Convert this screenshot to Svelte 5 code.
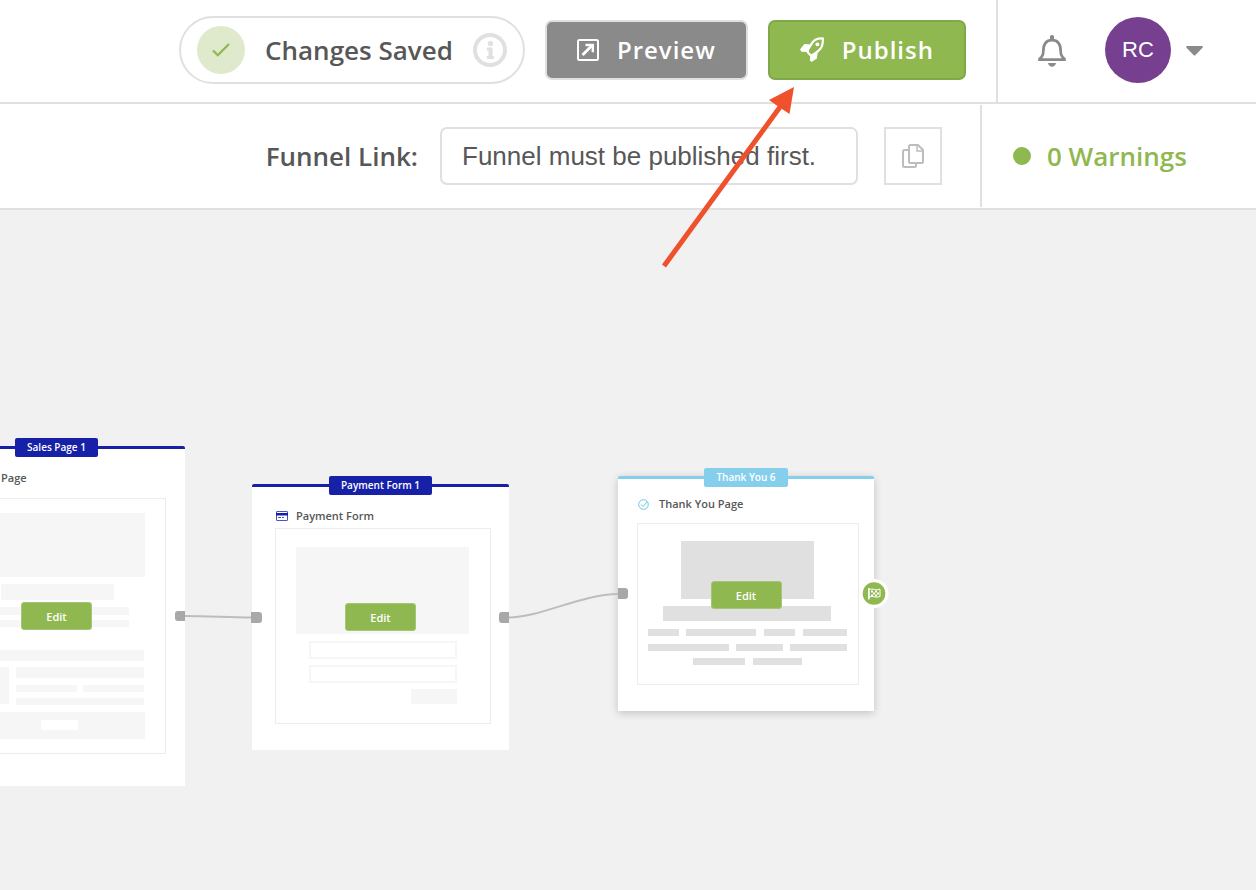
<script lang="ts">
  type Block = { x: number; y: number; w: number; h: number; kind?: string };

  type FunnelNode = {
    id: string;
    badge: string;
    title: string;
    x: number;
    y: number;
    width: number;
    thumb: { w: number; h: number; blocks: Block[] };
  };

  const nodes: FunnelNode[] = [
    {
      id: "sales",
      badge: "Sales Page 1",
      title: "Sales Page",
      x: -72,
      y: 236,
      width: 257,
      thumb: {
        w: 219,
        h: 256,
        blocks: [
          { x: 21, y: 15, w: 177, h: 64 },
          { x: 54, y: 86, w: 113, h: 16 },
          { x: 37, y: 109, w: 145, h: 8 },
          { x: 37, y: 122, w: 145, h: 7 },
          { x: 21, y: 152, w: 176, h: 11 },
          { x: 21, y: 169, w: 41, h: 37 },
          { x: 69, y: 169, w: 128, h: 11 },
          { x: 69, y: 187, w: 61, h: 7 },
          { x: 136, y: 187, w: 61, h: 7 },
          { x: 69, y: 200, w: 128, h: 7 },
          { x: 21, y: 214, w: 177, h: 27 },
          { x: 94, y: 222, w: 37, h: 10, kind: "hole" },
        ],
      },
    },
    {
      id: "payment",
      badge: "Payment Form 1",
      title: "Payment Form",
      x: 252,
      y: 274,
      width: 257,
      thumb: {
        w: 216,
        h: 196,
        blocks: [
          { x: 21, y: 19, w: 173, h: 87 },
          { x: 35, y: 114, w: 146, h: 16, kind: "field" },
          { x: 35, y: 138, w: 146, h: 16, kind: "field" },
          { x: 136, y: 161, w: 46, h: 15 },
        ],
      },
    },
    {
      id: "thanks",
      badge: "Thank You 6",
      title: "Thank You Page",
      x: 618,
      y: 266,
      width: 256,
      thumb: {
        w: 222,
        h: 162,
        blocks: [
          { x: 44, y: 18, w: 133, h: 58 },
          { x: 26, y: 83, w: 168, h: 15 },
          { x: 11, y: 106, w: 31, h: 7 },
          { x: 49, y: 106, w: 70, h: 7 },
          { x: 127, y: 106, w: 31, h: 7 },
          { x: 166, y: 106, w: 44, h: 7 },
          { x: 11, y: 121, w: 81, h: 7 },
          { x: 99, y: 121, w: 47, h: 7 },
          { x: 153, y: 121, w: 57, h: 7 },
          { x: 56, y: 135, w: 52, h: 7 },
          { x: 116, y: 135, w: 49, h: 7 },
        ],
      },
    },
  ];

  let link = $state("Funnel must be published first.");
</script>

<div class="page">
  <header>
    <div class="bar">
      <div class="actions">
        <div class="status">
          <span class="check">
            <svg width="20" height="16" viewBox="0 0 20 16" aria-hidden="true">
              <path d="M2 8.5 6.8 13.2 18 2" fill="none" stroke="#8fb850" stroke-width="2.3" />
            </svg>
          </span>
          <span>Changes Saved</span>
          <svg width="34" height="34" viewBox="0 0 34 34" aria-hidden="true">
            <circle cx="17" cy="17" r="15" fill="none" stroke="#e0e0e0" stroke-width="4" />
            <circle cx="17.5" cy="10.5" r="2.6" fill="#e0e0e0" />
            <path d="M14 14.5h5.500v8.500h1.500v3h-7v-3h1.500v-5.500H14z" fill="#e0e0e0" />
          </svg>
        </div>
        <button class="btn preview">
          <svg width="22" height="22" viewBox="0 0 22 22" fill="none" stroke="#fff" aria-hidden="true">
            <rect x="1" y="1" width="20" height="20" rx="1.5" stroke-width="2" />
            <path d="M5.5 16 15 6.5" stroke-width="2.8" />
            <path d="M8.5 6h7.3v7.3" stroke-width="2.4" />
          </svg>
          Preview
        </button>
        <button class="btn publish">
          <svg width="24" height="26" viewBox="0 0 24 26" aria-hidden="true">
            <path
              d="M22.800 1.500c-5.300-.300-8.600 1.200-11 4.800L7.800 12.800v2.600l2.600 2.700 2.800-.200 5.400-4.300c3.300-2.700 4.600-6.600 4.200-12.100z"
              fill="none"
              stroke="#fff"
              stroke-width="2.200"
            />
            <circle cx="17.400" cy="7.300" r="1.900" fill="#fff" />
            <path d="M10.600 7.500 4.300 6.900 0 12.400l1.500 2.400 6 .2z" fill="#fff" />
            <path d="M17.800 14.600 16.900 21.500 11.500 25l-1.700-1.500.700-6z" fill="#fff" />
          </svg>
          Publish
        </button>
      </div>
      <div class="account">
        <button class="bare" aria-label="Notifications">
          <svg width="28" height="32" viewBox="0 0 28 32" aria-hidden="true">
            <path
              d="M5.300 16.500c0-8 2.900-11.300 8.700-11.300s8.700 3.300 8.700 11.300c0 3.500 1 5.500 3.700 7.300v.800H1.600v-.800c2.700-1.800 3.700-3.800 3.700-7.300z"
              fill="none"
              stroke="#8a8a8a"
              stroke-width="2.700"
            />
            <path d="M12 1q2-2 4 0v4h-4z" fill="#8a8a8a" />
            <path d="M10 28h8c-.6 2.600-2 3.800-4 3.800s-3.400-1.200-4-3.800z" fill="#8a8a8a" />
          </svg>
        </button>
        <button class="bare user" aria-label="Account menu">
          <span class="avatar">RC</span>
          <svg width="17" height="12" viewBox="0 -2 17 12" aria-hidden="true">
            <path d="M1 0h15q1.400.5.5 1.700L9.500 9q-1 1-2 0L.5 1.700Q-.4.500 1 0z" fill="#8a8a8a" />
          </svg>
        </button>
      </div>
    </div>

    <div class="bar link-bar">
      <div class="link">
        <label for="funnel-link">Funnel Link:</label>
        <input id="funnel-link" type="text" readonly bind:value={link} />
        <button class="copy" aria-label="Copy funnel link">
          <svg width="22" height="24" viewBox="0 0 22 24" fill="none" stroke="#bdbdbd" stroke-width="2" aria-hidden="true">
            <path d="M7 6H2.500Q1 6 1 7.500v14Q1 23 2.500 23h10q1.500 0 1.500-1.500V19" />
            <path d="M8.500 1H16l5 5v11.500q0 1.500-1.500 1.500h-11Q7 19 7 17.500v-15Q7 1 8.500 1z" />
            <path d="M15 1v6h6" stroke-width="1.500" />
          </svg>
        </button>
      </div>
      <div class="warnings">
        <span class="dot"></span>
        <a href="#warnings">0 Warnings</a>
      </div>
    </div>

    <svg class="arrow" width="134" height="182" viewBox="0 0 134 182" aria-hidden="true">
      <path d="M3 179 119 20" stroke="#ee512c" stroke-width="5" />
      <path d="M133 0 108 13l8.500 6 4.500 3 7.500 5z" fill="#ee512c" />
    </svg>
  </header>

  <main class="canvas">
    {#each nodes as node (node.id)}
      <section
        class="node {node.id}"
        style="left: {node.x}px; top: {node.y}px; width: {node.width}px"
      >
        <span class="badge">{node.badge}</span>
        <h2>
          {#if node.id === "thanks"}
            <svg width="11" height="11" viewBox="0 0 11 11" fill="none" stroke="#6cc3e6" aria-hidden="true">
              <circle cx="5.500" cy="5.500" r="4.800" />
              <path d="m3 5.500 2 2 4-4.500" />
            </svg>
          {:else}
            <svg width="12" height="10" viewBox="0 0 12 10" aria-hidden="true">
              <rect x=".5" y=".5" width="11" height="9" rx=".5" fill="#fff" stroke="#4a53c0" />
              <path d="M0 2h12v2.500H0z" fill="#1621a8" />
              <path d="M2 6.500h3M6 6.500h2" stroke="#4a53c0" />
            </svg>
          {/if}
          {node.title}
        </h2>
        <div class="preview-box">
          <svg
            class="thumb"
            width={node.thumb.w}
            height={node.thumb.h}
            viewBox="0 0 {node.thumb.w} {node.thumb.h}"
            aria-hidden="true"
          >
            <rect class="frame" x=".5" y=".5" width={node.thumb.w - 1} height={node.thumb.h - 1} />
            {#each node.thumb.blocks as block}
              <rect class={block.kind ?? "block"} x={block.x} y={block.y} width={block.w} height={block.h} />
            {/each}
          </svg>
          <button class="edit">Edit</button>
        </div>
      </section>
    {/each}

    <svg class="wires" width="900" height="500" viewBox="0 0 900 500" aria-hidden="true">
      <path class="wire" d="M185 406C210 406 228 407.500 252 407.500" />
      <path class="wire" d="M509 407.500C540 407.500 582 384 618 384" />
      <path class="port" d="M185 401h-7q-3 0-3 3v4q0 3 3 3h7z" />
      <path class="port" d="M251 402h8q3 0 3 3v5q0 3-3 3h-8z" />
      <path class="port" d="M509 402h-7q-3 0-3 3v5q0 3 3 3h7z" />
      <path class="port" d="M618 378h7q3 0 3 3v5q0 3-3 3h-7z" />
      <circle cx="874" cy="383.500" r="14.500" fill="#fff" />
      <circle cx="874" cy="383.500" r="11.300" fill="#8fb850" />
      <path d="M868.800 378v11.500" stroke="#fff" stroke-width="1.500" />
      <path d="M869 379.500q3-1 5.500 0t5.500-.5v7.500q-3 1.200-5.500.300t-5.500.400z" fill="none" stroke="#fff" />
      <path d="M871 380.500h2v2h-2zM875 380.500h2v2h-2zM873 382.500h2v2h-2zM877 382.500h2v2h-2zM871 384.500h2v2h-2zM875 384.500h2v2h-2z" fill="#fff" />
    </svg>
  </main>
</div>

<style>
  :global(body) {
    margin: 0;
  }

  .page {
    display: flex;
    flex-direction: column;
    min-height: 100vh;
    font-family: "Open Sans", sans-serif;
    font-weight: 600;
    color: #575757;
    background-color: #f1f1f1;
  }

  header {
    position: relative;
    z-index: 2;
    font-size: 26px;
    line-height: 36px;
    background-color: white;
  }

  button {
    font: inherit;
    cursor: pointer;
  }

  svg {
    flex: none;
  }

  .bar {
    display: flex;
    justify-content: flex-end;
    height: 102px;
    border-bottom: 2px solid #e0e0e0;
  }

  .link-bar {
    height: 104px;
  }

  .actions,
  .link,
  .account,
  .warnings,
  .status,
  .btn,
  .user {
    display: flex;
    align-items: center;
    white-space: nowrap;
  }

  .actions {
    gap: 20px;
    padding: 0 30px 2px 0;
  }

  .status {
    gap: 20px;
    height: 64px;
    padding: 0 16px;
    border: 2px solid #e0e0e0;
    border-radius: 34px;
  }

  .check {
    display: flex;
    align-items: center;
    justify-content: center;
    width: 48px;
    height: 48px;
    border-radius: 50%;
    background-color: #dfe9cc;
  }

  .btn {
    gap: 18px;
    height: 60px;
    padding: 0 30px;
    border: 2px solid #e0e0e0;
    border-radius: 7px;
    color: white;
    font-size: 24px;
    letter-spacing: 1px;
  }

  .preview {
    background-color: #8a8a8a;
  }

  .publish {
    border-color: #7fa946;
    background-color: #8fb850;
  }

  .account,
  .warnings {
    box-sizing: border-box;
    border-left: 2px solid #e0e0e0;
  }

  .account {
    gap: 39px;
    width: 260px;
    padding-left: 40px;
  }

  .bare {
    padding: 0;
    border: none;
    background: none;
  }

  .bare > svg {
    display: block;
  }

  .user {
    gap: 15px;
    padding-bottom: 2px;
  }

  .avatar {
    width: 66px;
    border-radius: 50%;
    color: white;
    font: 22px/66px "Liberation Sans", sans-serif;
    text-align: center;
    background-color: #763f8f;
  }

  .link {
    padding-right: 38px;
  }

  .link input {
    box-sizing: border-box;
    width: 418px;
    height: 58px;
    margin: 0 26px 0 22px;
    padding: 0 20px;
    border: 2px solid #e0e0e0;
    border-radius: 7px;
    color: #575757;
    font: 26px "Liberation Sans", sans-serif;
    background-color: white;
  }

  .copy {
    display: flex;
    align-items: center;
    justify-content: center;
    width: 58px;
    height: 58px;
    padding: 0;
    border: 2px solid #e0e0e0;
    background-color: white;
  }

  .warnings {
    gap: 16px;
    width: 276px;
    margin: 1px 0;
    padding-left: 31px;
  }

  .warnings a {
    color: #8fb850;
    text-decoration: none;
  }

  .dot {
    width: 18px;
    height: 18px;
    border-radius: 50%;
    background-color: #8fb850;
  }

  .arrow {
    position: absolute;
    top: 87px;
    right: 461px;
    pointer-events: none;
  }

  .canvas {
    position: relative;
    flex: 1;
    min-height: 600px;
    overflow: hidden;
    font-size: 11px;
  }

  .node {
    position: absolute;
    box-sizing: border-box;
    padding: 19px 0 32px;
    border-top: 3px solid #1621a8;
    border-radius: 2px 2px 0 0;
    background-color: white;
  }

  .badge {
    position: absolute;
    top: -11px;
    left: 0;
    right: 0;
    width: fit-content;
    margin: 0 auto;
    padding: 0 12px;
    border-radius: 2px;
    color: white;
    font-size: 10px;
    line-height: 19px;
    white-space: nowrap;
    background-color: #1621a8;
  }

  h2 {
    display: flex;
    align-items: center;
    gap: 8px;
    margin: 0 0 10px 23px;
    font-size: 11px;
    font-weight: 600;
    line-height: 20px;
  }

  .preview-box {
    position: relative;
  }

  .thumb {
    display: block;
    margin-left: 19px;
  }

  .frame,
  .field {
    fill: white;
    stroke: #ececec;
  }

  .field {
    stroke: #f6f6f6;
    stroke-width: 2px;
  }

  .block {
    fill: #f6f6f6;
  }

  .hole {
    fill: white;
  }

  .edit {
    position: absolute;
    top: 104px;
    left: 0;
    right: 0;
    width: 71px;
    height: 28px;
    margin: 0 auto;
    padding: 0;
    border: 1px solid #a5c673;
    border-radius: 3px;
    color: white;
    background-color: #8fb850;
  }

  .payment {
    padding-bottom: 26px;
  }

  .payment h2 {
    margin: 0 0 2px 24px;
  }

  .payment .thumb {
    margin-left: 23px;
  }

  .payment .edit {
    top: 75px;
  }

  .thanks {
    padding: 15px 0 26px;
    border-color: #85cfec;
    box-shadow: 0 2px 8px rgb(0 0 0 / 20%);
  }

  .thanks .badge {
    background-color: #85cfec;
  }

  .thanks h2 {
    gap: 10px;
    margin: 0 0 9px 20px;
  }

  .thanks .edit {
    top: 58px;
  }

  .thanks .block {
    fill: #e0e0e0;
  }

  .wires {
    position: absolute;
    top: 0;
    left: 0;
    pointer-events: none;
  }

  .wire {
    fill: none;
    stroke: #bdbdbd;
    stroke-width: 2px;
  }

  .port {
    fill: #a8a8a8;
  }
</style>
